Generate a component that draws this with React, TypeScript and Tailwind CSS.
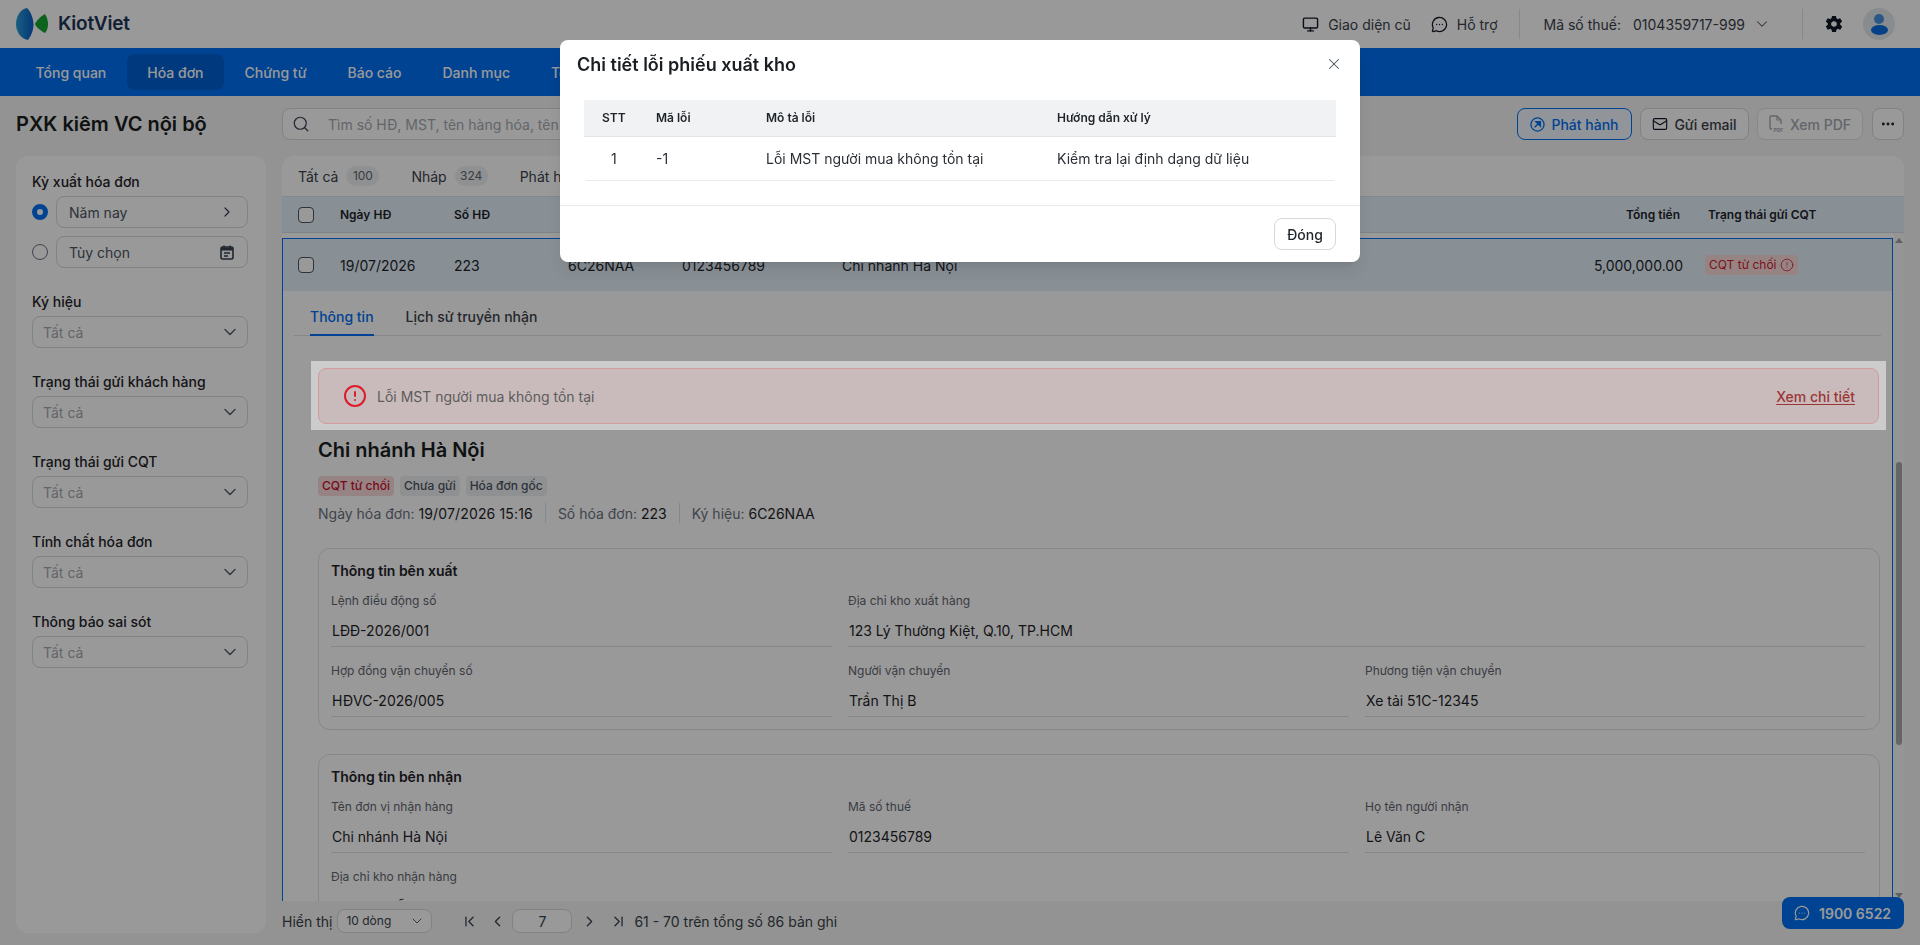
import { Search, ChevronRight, ChevronDown, ChevronLeft, ChevronFirst, ChevronLast, Monitor, MessageCircleMore, Mail, Ellipsis, CircleAlert, X } from "lucide-react";
import { IoMdSettings } from "react-icons/io";

function Logo() {
  return (
    <svg width="34" height="36" viewBox="0 0 34 36" className="mr-[8px]">
      <defs>
        <linearGradient id="lg1" x1="0" y1="0" x2="1" y2="0">
          <stop offset="0" stopColor="#2aa0d8" />
          <stop offset="1" stopColor="#0a5cc4" />
        </linearGradient>
      </defs>
      <path d="M11 2 C4 3 0 11 0 18 C0 26 5 33 12 34 C16 29 17.5 23 17.5 18 C17 12 15 6 11 2Z" fill="url(#lg1)" />
      <path d="M19 18 C20 15 25 10 29 8 C31 11 32 15 32 18 C32 21 31 25 29 27 C25 25 20 21 19 18Z" fill="#14a52e" />
    </svg>
  );
}

function Field({ label, value, full }: { label: string; value: string; full?: boolean }) {
  return (
    <div className={full ? "col-span-2 flex flex-col" : "flex flex-col"}>
      <div className="h-4 text-[12px] leading-4 text-[#5f6670]">{label}</div>
      <div className="flex h-[38px] items-center border-b border-[#dfe2e6] pl-px pt-[6px] text-[14px] text-[#1f2429]">{value}</div>
    </div>
  );
}

function Select({ label }: { label: string }) {
  return (
    <div className="mb-6 flex flex-col gap-1">
      <div className="h-5 text-[14px] font-medium leading-5 text-[#1f2429]">{label}</div>
      <div className="flex h-8 items-center justify-between rounded-lg border border-[#d5d9de] pl-[10px] pr-[7px] text-[14px] text-[#a4a9b0]">
        Tất cả
        <ChevronDown size={20} strokeWidth={1.5} className="text-[#4b5563]" />
      </div>
    </div>
  );
}

function Badge({ children, red }: { children: React.ReactNode; red?: boolean }) {
  return (
    <span className={red ? "flex h-5 items-center rounded bg-[#fbdcdc] px-[4px] text-[12px] font-medium text-[#c8102e]" : "flex h-5 items-center rounded bg-[#eef0f2] px-[4px] text-[12px] font-medium text-[#4b5563]"}>
      {children}
    </span>
  );
}

export default function App() {
  return (
    <div className="relative h-[945px] w-[1920px] overflow-hidden bg-[#f3f6f3] text-[#1f2429] [font-family:Inter,sans-serif]">
      {/* header */}
      <header className="flex h-12 items-center bg-white pl-4 pr-[25px]">
        <Logo />
        <span className="text-[19px] font-semibold tracking-[-0.2px] text-[#1d3557]">KiotViet</span>
        <div className="ml-auto flex items-center text-[14px] text-[#3b424b]">
          <Monitor size={17} strokeWidth={2} className="mr-[9px] text-[#111827]" />
          <span>Giao diện cũ</span>
          <MessageCircleMore size={17} strokeWidth={1.8} className="ml-5 mr-[9px] text-[#111827]" />
          <span>Hỗ trợ</span>
          <div className="ml-[21px] mr-[24px] h-[30px] w-px bg-[#e1e3e6]" />
          <span>Mã số thuế:</span>
          <span className="ml-3">0104359717-999</span>
          <ChevronDown size={18} strokeWidth={1.4} className="ml-2 text-[#4b5563]" />
          <div className="ml-[31px] mr-[21px] h-[30px] w-px bg-[#e1e3e6]" />
          <IoMdSettings size={20} className="mr-[19px] text-[#111827]" />
          <div className="flex h-8 w-8 flex-col items-center justify-center rounded-full bg-[#e5e9ee]">
            <div className="h-[10px] w-[10px] rounded-full bg-[#4a8fe0]" />
            <div className="mt-[1px] h-[10px] w-[17px] rounded-[50%] bg-[#0b6be0]" />
          </div>
        </div>
      </header>

      {/* nav */}
      <nav className="flex h-12 items-center bg-[#0070f4] pl-[15px] text-[14px] font-medium text-white">
        <div className="flex h-9 items-center rounded-lg px-[20.5px]">Tổng quan</div>
        <div className="flex h-9 items-center rounded-lg bg-[#0060d2] px-[20.5px]">Hóa đơn</div>
        <div className="flex h-9 items-center rounded-lg px-[20.5px]">Chứng từ</div>
        <div className="flex h-9 items-center rounded-lg px-[20.5px]">Báo cáo</div>
        <div className="flex h-9 items-center rounded-lg px-[20.5px]">Danh mục</div>
        <div className="flex h-9 items-center rounded-lg px-[20.5px]">Tờ khai</div>
      </nav>

      {/* title row */}
      <div className="flex h-[60px] pl-4 pr-4 pt-3">
        <div className="w-[266px] text-[20px] font-semibold leading-8 text-[#1a1d21]">PXK kiêm VC nội bộ</div>
        <div className="flex h-8 w-[780px] items-center rounded-lg border border-[#d5d9de] bg-white pl-[9px] text-[14px] text-[#a4a9b0]">
          <Search size={18} strokeWidth={1.6} className="mr-[18px] text-[#374151]" />
          Tìm số HĐ, MST, tên hàng hóa, tên khách hàng
        </div>
        <div className="ml-auto flex gap-2 text-[14px] font-medium">
          <div className="flex h-8 w-[115px] items-center justify-center gap-[6px] rounded-lg border border-[#0070f4] bg-[#f2f8ff] text-[#0070f4]">
            <svg width="15" height="15" viewBox="0 0 16 16" fill="none">
              <circle cx="8" cy="8" r="7" stroke="#0070f4" strokeWidth="1.4" />
              <path d="M5 11 L10.5 5.5 M6.5 5 H11 V9.5 Z" stroke="#0070f4" strokeWidth="1.6" fill="#0070f4" />
            </svg>
            Phát hành
          </div>
          <div className="flex h-8 w-[109px] items-center justify-center gap-[6px] rounded-lg border border-[#d5d9de] bg-white text-[#3b424b]">
            <Mail size={16} strokeWidth={1.7} className="text-[#111827]" />
            Gửi email
          </div>
          <div className="flex h-8 w-[106px] items-center justify-center gap-[6px] rounded-lg border border-[#e1e3e6] bg-white text-[#a4a9b0]">
            <svg width="15" height="18" viewBox="0 0 15 18" fill="none">
              <path d="M3 14 H2 A1 1 0 0 1 1 13 V2 A1 1 0 0 1 2 1 H8 L12 5 V9" stroke="#a4a9b0" strokeWidth="1.4" />
              <path d="M8 1 V5 H12" stroke="#a4a9b0" strokeWidth="1.2" />
              <text x="4.5" y="16.5" fontSize="5" fontWeight="700" fill="#a4a9b0">PDF</text>
            </svg>
            Xem PDF
          </div>
          <div className="ml-px flex h-8 w-8 items-center justify-center rounded-lg border border-[#d5d9de] bg-white text-[#1f2429]">
            <Ellipsis size={16} strokeWidth={2.4} />
          </div>
        </div>
      </div>

      {/* main */}
      <div className="flex gap-4 px-4">
        {/* sidebar */}
        <aside className="h-[777px] w-[250px] rounded-xl bg-white py-4 pl-4 pr-[18px]">
          <div className="mb-6 flex flex-col gap-1">
            <div className="h-5 text-[14px] font-medium leading-5">Kỳ xuất hóa đơn</div>
            <div className="flex items-center gap-2">
              <div className="h-4 w-4 rounded-full border-[5px] border-[#0070f4] bg-white" />
              <div className="flex h-8 flex-1 items-center justify-between rounded-lg border border-[#d5d9de] pl-[12px] pr-[12px] text-[14px] text-[#4b5563]">
                Năm nay
                <ChevronRight size={16} strokeWidth={1.8} className="text-[#374151]" />
              </div>
            </div>
            <div className="mt-1 flex items-center gap-2">
              <div className="h-4 w-4 rounded-full border border-[#6b7280] bg-white" />
              <div className="flex h-8 flex-1 items-center justify-between rounded-lg border border-[#d5d9de] pl-[12px] pr-[12px] text-[14px] text-[#4b5563]">
                Tùy chọn
                <svg width="16" height="17" viewBox="0 0 16 17" fill="none">
                  <rect x="2" y="3" width="12" height="12" rx="1.5" stroke="#374151" strokeWidth="1.6" />
                  <path d="M2 3.5 H14 V6.5 H2 Z" fill="#374151" />
                  <path d="M5 1.5 V4 M11 1.5 V4 M5 9 H11 M5 12 H9" stroke="#374151" strokeWidth="1.4" />
                </svg>
              </div>
            </div>
          </div>
          <Select label="Ký hiệu" />
          <Select label="Trạng thái gửi khách hàng" />
          <Select label="Trạng thái gửi CQT" />
          <Select label="Tính chất hóa đơn" />
          <Select label="Thông báo sai sót" />
        </aside>

        {/* content */}
        <div className="flex h-[777px] flex-1 flex-col">
          <div className="flex h-[745px] flex-col overflow-hidden rounded-t-xl bg-white">
            <div className="flex h-[41px] shrink-0 items-center gap-8 border-b border-[#dfe2e6] pl-4 text-[14px] text-[#3b424b]">
              <div className="flex items-center gap-2">
                Tất cả
                <span className="flex h-5 w-[33px] items-center justify-center rounded-full bg-[#eef0f2] text-[12px] text-[#5f6670]">100</span>
              </div>
              <div className="flex items-center gap-2">
                Nháp
                <span className="flex h-5 w-[33px] items-center justify-center rounded-full bg-[#eef0f2] text-[12px] text-[#5f6670]">324</span>
              </div>
              <div>Phát hành</div>
            </div>
            <div className="flex h-9 shrink-0 items-center border-b border-[#d3dde6] bg-[#e3f0fb] pl-4 text-[12px] font-semibold text-[#1f2429]">
              <div className="mr-[26px] h-4 w-4 rounded border border-[#4b5563] bg-white" />
              <div className="w-[114px]">Ngày HĐ</div>
              <div className="w-[114px]">Số HĐ</div>
              <div className="w-[114px]">Ký hiệu</div>
              <div className="w-[160px]">MST</div>
              <div className="w-[684px]">Tên đơn vị</div>
              <div className="w-[154px] text-right">Tổng tiền</div>
              <div className="ml-[28px]">Trạng thái gửi CQT</div>
            </div>

            <div className="flex min-h-0 flex-1">
              {/* scroll content */}
              <div className="mt-[5px] min-w-0 flex-1 overflow-hidden border-x border-t border-[#0070f4]">
                <div className="flex h-[52px] items-center bg-[#e3f0fb] pl-[15px] text-[14px] text-[#1f2429]">
                  <div className="mr-[26px] h-4 w-4 rounded border border-[#4b5563] bg-white" />
                  <div className="w-[114px]">19/07/2026</div>
                  <div className="w-[114px]">223</div>
                  <div className="w-[114px]">6C26NAA</div>
                  <div className="w-[160px]">0123456789</div>
                  <div className="w-[684px]">Chi nhánh Hà Nội</div>
                  <div className="w-[157px] text-right">5,000,000.00</div>
                  <div className="ml-[22px] flex h-5 items-center gap-[3px] rounded-[3px] bg-[#fbdcdc] px-[4px] text-[12px] text-[#d0202e]">
                    CQT từ chối
                    <CircleAlert size={14} strokeWidth={1.4} />
                  </div>
                </div>

                <div className="mx-[11px] flex h-[45px] items-end gap-8 border-b border-[#dfe2e6] pl-4 text-[14px] font-medium">
                  <div className="mb-[-1px] flex h-[30px] items-start border-b-2 border-[#0070f4] text-[#0070f4]">Thông tin</div>
                  <div className="flex h-[29px] items-start text-[#3b424b]">Lịch sử truyền nhận</div>
                </div>

                <div className="relative z-50 ml-[28px] mr-[6px] mt-[25px] h-[69px] bg-[#cccccc] p-[7px]">
                  <div className="flex h-[56px] items-center rounded-lg border border-[#d49a9e] bg-[#c9bbbb] pl-[24px] pr-[23px] text-[14px] text-[#5c5c5c]">
                    <CircleAlert size={24} strokeWidth={2} className="mr-[10px] text-[#dd1c2b]" />
                    Lỗi MST người mua không tồn tại
                    <span className="ml-auto font-medium text-[#9c3535] underline underline-offset-2">Xem chi tiết</span>
                  </div>
                </div>

                <div className="ml-[35px] mr-[12px]">
                  <div className="mt-[6px] text-[20px] font-semibold leading-7 text-[#1a1d21]">Chi nhánh Hà Nội</div>
                  <div className="mt-3 flex gap-[6px]">
                    <Badge red>CQT từ chối</Badge>
                    <Badge>Chưa gửi</Badge>
                    <Badge>Hóa đơn gốc</Badge>
                  </div>
                  <div className="mt-[7px] flex h-5 items-center text-[14px] text-[#6b7280]">
                    <span>Ngày hóa đơn:&nbsp;<span className="tracking-[0.15px] text-[#1f2429]">19/07/2026 15:16</span></span>
                    <div className="mx-3 h-5 w-px bg-[#dfe2e6]" />
                    <span>Số hóa đơn:&nbsp;<span className="text-[#1f2429]">223</span></span>
                    <div className="mx-3 h-5 w-px bg-[#dfe2e6]" />
                    <span>Ký hiệu:&nbsp;<span className="text-[#1f2429]">6C26NAA</span></span>
                  </div>

                  <div className="mt-[25px] rounded-xl border border-[#dfe2e6] pb-3 pl-3 pr-[14px] pt-3">
                    <div className="mb-3 h-5 text-[14px] font-semibold leading-5">Thông tin bên xuất</div>
                    <div className="grid grid-cols-[501px_501px_1fr] gap-x-4 gap-y-4">
                      <Field label="Lệnh điều động số" value="LĐĐ-2026/001" />
                      <Field label="Địa chỉ kho xuất hàng" value="123 Lý Thường Kiệt, Q.10, TP.HCM" full />
                      <Field label="Hợp đồng vận chuyển số" value="HĐVC-2026/005" />
                      <Field label="Người vận chuyển" value="Trần Thị B" />
                      <Field label="Phương tiện vận chuyển" value="Xe tải 51C-12345" />
                    </div>
                  </div>

                  <div className="mt-[24px] rounded-xl border border-[#dfe2e6] pb-3 pl-3 pr-[14px] pt-3">
                    <div className="mb-3 h-5 text-[14px] font-semibold leading-5">Thông tin bên nhận</div>
                    <div className="grid grid-cols-[501px_501px_1fr] gap-x-4 gap-y-4">
                      <Field label="Tên đơn vị nhận hàng" value="Chi nhánh Hà Nội" />
                      <Field label="Mã số thuế" value="0123456789" />
                      <Field label="Họ tên người nhận" value="Lê Văn C" />
                      <Field label="Địa chỉ kho nhận hàng" value="456 Nguyễn Trãi, Q.5, TP.HCM" />
                    </div>
                  </div>
                </div>
              </div>

              {/* scrollbar */}
              <div className="flex w-[11px] shrink-0 flex-col items-center bg-[#f8f8f8] pt-[5px]">
                <div className="h-0 w-0 border-x-[4px] border-b-[5px] border-x-transparent border-b-[#a0a0a0]" />
                <div className="mt-[219px] h-[283px] w-[6px] rounded-full bg-[#a8a8a8]" />
                <div className="mb-[3px] mt-auto h-0 w-0 border-x-[4px] border-t-[5px] border-x-transparent border-t-[#a0a0a0]" />
              </div>
            </div>
          </div>

          {/* pagination */}
          <div className="flex h-8 items-center pt-2 text-[14px] text-[#3b424b]">
            <span className="mr-[5px]">Hiển thị</span>
            <div className="flex h-6 w-[95px] items-center justify-between rounded-lg border border-[#d5d9de] bg-white pl-2 pr-[6px] text-[12px]">
              10 dòng
              <ChevronDown size={16} strokeWidth={1.4} className="text-[#4b5563]" />
            </div>
            <ChevronFirst size={17} strokeWidth={1.8} className="ml-[29px] text-[#374151]" />
            <ChevronLeft size={17} strokeWidth={1.8} className="ml-[11px] text-[#374151]" />
            <div className="ml-[6px] flex h-6 w-[60px] items-center justify-center rounded-lg border border-[#d5d9de] bg-white">7</div>
            <ChevronRight size={17} strokeWidth={1.8} className="ml-[9px] text-[#374151]" />
            <ChevronLast size={17} strokeWidth={1.8} className="ml-[12px] text-[#374151]" />
            <span className="ml-[7px]">61 - 70 trên tổng số 86 bản ghi</span>
          </div>
        </div>
      </div>

      {/* hotline */}
      <div className="absolute left-[1782px] top-[897px] flex h-8 w-[122px] items-center gap-[9px] rounded-lg bg-[#0070f4] pl-3 text-[14px] font-semibold text-white">
        <MessageCircleMore size={16} strokeWidth={1.8} />
        1900 6522
      </div>

      {/* overlay */}
      <div className="fixed inset-0 z-40 bg-black/40" />

      {/* modal */}
      <div className="absolute left-[560px] top-[40px] z-[60] h-[222px] w-[800px] rounded-lg bg-white shadow-lg">
        <div className="flex h-[48px] items-center justify-between pl-[17px] pr-[17px]">
          <h2 className="text-[18px] font-semibold text-[#1a1d21]">Chi tiết lỗi phiếu xuất kho</h2>
          <X size={18} strokeWidth={1.4} className="text-[#4b5563]" />
        </div>
        <div className="mx-6 mt-3 h-[105px]">
          <div className="flex h-[37px] items-center border-b border-[#e1e3e6] bg-[#f1f2f4] text-[12px] font-semibold text-[#1f2429]">
            <div className="w-[72px] pl-[18px]">STT</div>
            <div className="w-[110px]">Mã lỗi</div>
            <div className="w-[291px]">Mô tả lỗi</div>
            <div>Hướng dẫn xử lý</div>
          </div>
          <div className="flex h-[43px] items-center text-[14px] text-[#2b3036]">
            <div className="w-[72px] pl-[27px]">1</div>
            <div className="w-[110px]">-1</div>
            <div className="w-[291px]">Lỗi MST người mua không tồn tại</div>
            <div>Kiểm tra lại định dạng dữ liệu</div>
          </div>
          <div className="mx-[2px] h-px bg-[#e8eaed]" />
        </div>
        <div className="flex h-[57px] items-start justify-end border-t border-[#e8eaed] pr-6 pt-3">
          <div className="flex h-8 w-[62px] items-center justify-center rounded-lg border border-[#d5d9de] text-[14px] font-medium text-[#1f2429]">Đóng</div>
        </div>
      </div>
    </div>
  );
}
